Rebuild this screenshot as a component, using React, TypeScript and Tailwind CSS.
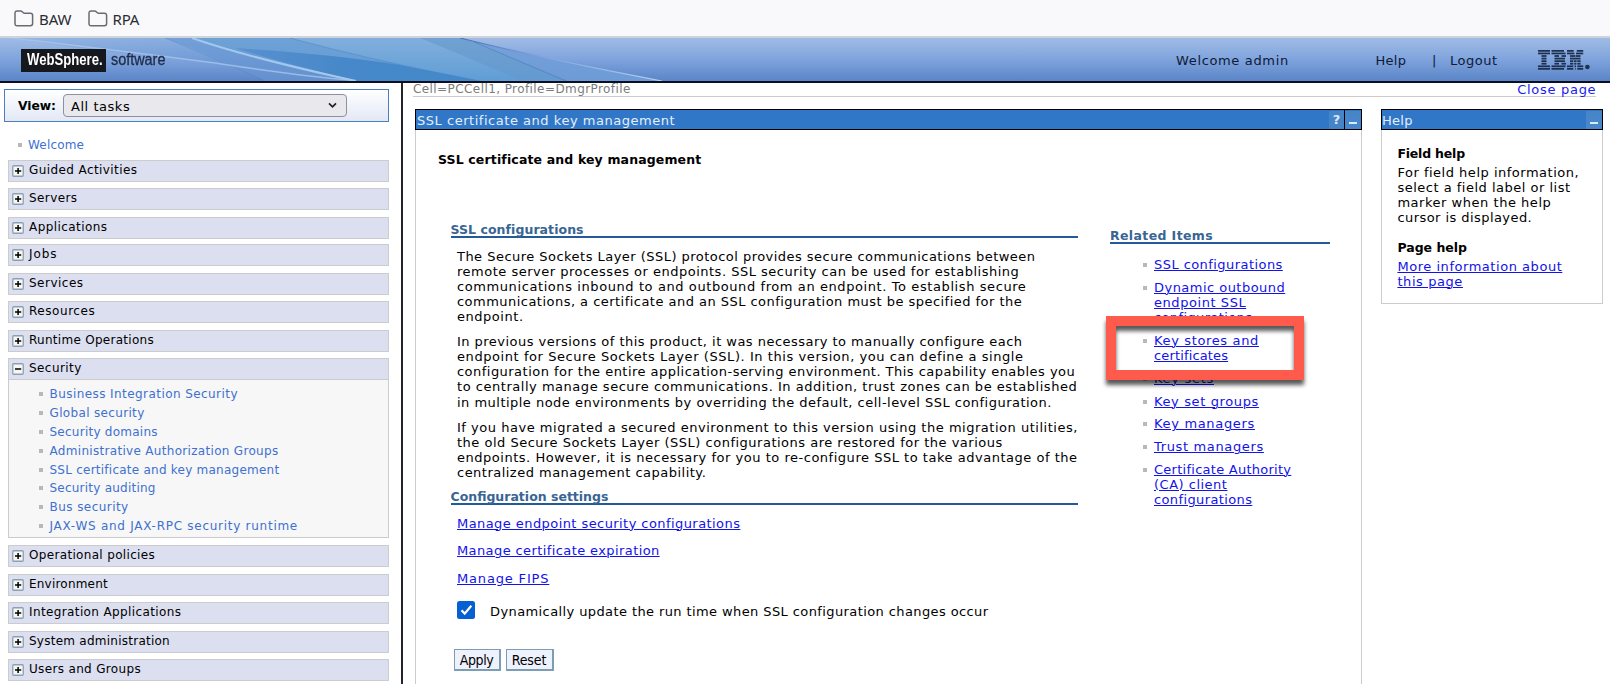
import type { ReactNode } from "react";

type Entry = { label: string; track: string; gap?: string };

const topGroups: Entry[] = [
  { label: "Guided Activities", track: "tracking-[0.41px]", gap: "mt-0" },
  { label: "Servers", track: "tracking-[0.4px]", gap: "mt-[6px]" },
  { label: "Applications", track: "tracking-[0.43px]", gap: "mt-[7px]" },
  { label: "Jobs", track: "tracking-[0.9px]", gap: "mt-[5px]" },
  { label: "Services", track: "tracking-[0.49px]", gap: "mt-[7px]" },
  { label: "Resources", track: "tracking-[0.55px]", gap: "mt-[6px]" },
  { label: "Runtime Operations", track: "tracking-[0.28px]", gap: "mt-[7px]" },
  { label: "Security", track: "tracking-[0.43px]", gap: "mt-[6px]" },
];

const securityItems: Entry[] = [
  { label: "Business Integration Security", track: "tracking-[0.43px]" },
  { label: "Global security", track: "tracking-[0.34px]" },
  { label: "Security domains", track: "tracking-[0.25px]" },
  { label: "Administrative Authorization Groups", track: "tracking-[0.31px]" },
  { label: "SSL certificate and key management", track: "tracking-[0.24px]" },
  { label: "Security auditing", track: "tracking-[0.23px]" },
  { label: "Bus security", track: "tracking-[0.44px]" },
  { label: "JAX-WS and JAX-RPC security runtime", track: "tracking-[0.73px]" },
];

const bottomGroups: Entry[] = [
  { label: "Operational policies", track: "tracking-[0.33px]", gap: "mt-[7px]" },
  { label: "Environment", track: "tracking-[0.21px]", gap: "mt-[7px]" },
  { label: "Integration Applications", track: "tracking-[0.38px]", gap: "mt-[6px]" },
  { label: "System administration", track: "tracking-[0.25px]", gap: "mt-[7px]" },
  { label: "Users and Groups", track: "tracking-[0.34px]", gap: "mt-[6px]" },
];

type Line = [string, string];

const paragraphs: Line[][] = [
  [
    ["The Secure Sockets Layer (SSL) protocol provides secure communications between", "tracking-[0.47px]"],
    ["remote server processes or endpoints. SSL security can be used for establishing", "tracking-[0.5px]"],
    ["communications inbound to and outbound from an endpoint. To establish secure", "tracking-[0.59px]"],
    ["communications, a certificate and an SSL configuration must be specified for the", "tracking-[0.47px]"],
    ["endpoint.", "tracking-[0.53px]"],
  ],
  [
    ["In previous versions of this product, it was necessary to manually configure each", "tracking-[0.47px]"],
    ["endpoint for Secure Sockets Layer (SSL). In this version, you can define a single", "tracking-[0.57px]"],
    ["configuration for the entire application-serving environment. This capability enables you", "tracking-[0.47px]"],
    ["to centrally manage secure communications. In addition, trust zones can be established", "tracking-[0.53px]"],
    ["in multiple node environments by overriding the default, cell-level SSL configuration.", "tracking-[0.48px]"],
  ],
  [
    ["If you have migrated a secured environment to this version using the migration utilities,", "tracking-[0.52px]"],
    ["the old Secure Sockets Layer (SSL) configurations are restored for the various", "tracking-[0.5px]"],
    ["endpoints. However, it is necessary for you to re-configure SSL to take advantage of the", "tracking-[0.52px]"],
    ["centralized management capability.", "tracking-[0.48px]"],
  ],
];

const relatedItems: Line[][] = [
  [["SSL configurations", "tracking-[0.44px]"]],
  [
    ["Dynamic outbound", "tracking-[0.47px]"],
    ["endpoint SSL", "tracking-[0.56px]"],
    ["configurations", "tracking-[0.38px]"],
  ],
  [
    ["Key stores and", "tracking-[0.64px]"],
    ["certificates", "tracking-[0.15px]"],
  ],
  [["Key sets", "tracking-[0.71px]"]],
  [["Key set groups", "tracking-[0.62px]"]],
  [["Key managers", "tracking-[0.67px]"]],
  [["Trust managers", "tracking-[0.65px]"]],
  [
    ["Certificate Authority", "tracking-[0.26px]"],
    ["(CA) client", "tracking-[0.5px]"],
    ["configurations", "tracking-[0.38px]"],
  ],
];

function Lines({ lines }: { lines: Line[] }) {
  return (
    <>
      {lines.map(([text, track]) => (
        <span key={text} className={`block whitespace-nowrap ${track}`}>
          {text}
        </span>
      ))}
    </>
  );
}

function FolderIcon() {
  return (
    <svg width="20" height="18" viewBox="0 0 20 18" fill="none" stroke="#6a6a74" strokeWidth="1.5">
      <path d="M1 3.2Q1 1 3.2 1H6.5Q7.6 1 8.3 1.8L9.3 2.8Q9.8 3.3 10.6 3.3H16.4Q18.6 3.3 18.6 5.5V13.6Q18.6 15.8 16.4 15.8H3.2Q1 15.8 1 13.6Z" />
    </svg>
  );
}

function ToggleIcon({ open }: { open?: boolean }) {
  return (
    <svg width="12" height="12" viewBox="0 0 12 12">
      <rect x="0.75" y="0.75" width="10.5" height="10.5" rx="1" fill="#f6f6f2" stroke="#8ba0b2" strokeWidth="1.3" />
      <path d="M3 6H9.2" stroke="#000" strokeWidth="1.5" />
      {!open && <path d="M6.1 2.9V9.1" stroke="#000" strokeWidth="1.5" />}
    </svg>
  );
}

function Bullet() {
  return <span className="size-[4px] shrink-0 bg-[#b8b8b8]" />;
}

function GroupBar({ entry, open }: { entry: Entry; open?: boolean }) {
  return (
    <div className={`flex h-[22px] items-start border border-[#cccccc] bg-[#dcdff0] pl-[3px] ${entry.gap}`}>
      <span className="mt-[4px] block">
        <ToggleIcon open={open} />
      </span>
      <span className={`ml-[5px] mt-[2px] whitespace-nowrap text-[12px] leading-[15px] ${entry.track}`}>{entry.label}</span>
    </div>
  );
}

function IbmLogo() {
  const bars: [number, number, number][] = [
    [0, 0, 12], [1, 0, 12], [2, 3.5, 5], [3, 3.5, 5], [4, 3.5, 5], [5, 3.5, 5], [6, 0, 12], [7, 0, 12],
    [0, 13.5, 12.5], [1, 13.5, 14], [2, 16.5, 4.5], [2, 23.5, 4.5], [3, 16.5, 10.5], [4, 16.5, 10.5],
    [5, 16.5, 4.5], [5, 23.5, 4.5], [6, 13.5, 14], [7, 13.5, 12.5],
    [0, 29, 6.7], [0, 38.8, 6.4], [1, 29, 7.4], [1, 38, 7.2], [2, 32, 5], [2, 37.5, 5], [3, 32, 10.5],
    [4, 32, 3.3], [4, 36, 2.6], [4, 39.3, 3.3], [5, 32, 3.3], [5, 36.2, 2.2], [5, 39.3, 3.3],
    [6, 29, 6.3], [6, 36.6, 1.4], [6, 39.3, 5.9], [7, 29, 6.3], [7, 37, 0.7], [7, 39.3, 5.9],
  ];
  return (
    <svg width="53" height="20" viewBox="0 0 53 20" fill="#1e3050">
      {bars.map(([row, x, w], i) => (
        <rect key={i} x={x} y={row * 2.57} width={w} height="1.75" />
      ))}
      <circle cx="49.4" cy="17" r="2.3" />
    </svg>
  );
}

function Swoosh() {
  return (
    <svg className="absolute left-0 top-0" width="700" height="43" viewBox="0 0 700 43">
      <defs>
        <linearGradient id="outer" x1="0" x2="0" y1="0" y2="1">
          <stop offset="0" stopColor="#82afdc" />
          <stop offset="1" stopColor="#5f9dd5" />
        </linearGradient>
        <linearGradient id="rim" x1="0" x2="1" y1="0" y2="0">
          <stop offset="0" stopColor="#4a74b4" />
          <stop offset="0.4" stopColor="#7fa3dc" />
          <stop offset="1" stopColor="#b7d0f2" />
        </linearGradient>
        <linearGradient id="mid" x1="0" x2="1" y1="0" y2="0">
          <stop offset="0" stopColor="#5c8fd0" stopOpacity="0.15" />
          <stop offset="1" stopColor="#5c93d0" stopOpacity="0.85" />
        </linearGradient>
        <linearGradient id="band" x1="0" x2="1" y1="0" y2="0">
          <stop offset="0" stopColor="#5a90d0" />
          <stop offset="0.45" stopColor="#4688c9" />
          <stop offset="1" stopColor="#4489c9" />
        </linearGradient>
      </defs>
      <path d="M10 0H460Q540 20 662 43H400Q120 18 10 0Z" fill="url(#mid)" />
      <path d="M455 0Q540 20 662 43H560Z" fill="#7aa3dc" opacity="0.6" />
      <path d="M192 0H462L568 43H350Q250 16 192 0Z" fill="url(#outer)" />
      <path d="M420 0H462L568 43H522Q470 20 420 0Z" fill="#6697cb" opacity="0.6" />
      <path d="M192 0H290Q370 22 480 43H355Q250 18 192 0Z" fill="#5f97d2" opacity="0.55" />
      <path d="M235 10Q330 16 400 27L480 43H355Q280 24 235 10Z" fill="url(#band)" />
      <path d="M165 0Q215 18 265 43H350Q250 16 192 0Z" fill="#6896d2" opacity="0.6" />
      <path d="M290 0Q370 22 480 43" fill="none" stroke="#4a83c4" strokeOpacity="0.5" />
      <path d="M474 4L566 43" fill="none" stroke="#4f80bd" strokeOpacity="0.7" />
      <path d="M165 0Q200 14 265 43" fill="none" stroke="#5580c0" strokeOpacity="0.35" />
      <path d="M12 0Q130 14 215 25Q300 38 350 42" fill="none" stroke="#a8c6ec" strokeWidth="1.6" strokeOpacity="0.8" />
      <path d="M192 0Q250 20 356 43" fill="none" stroke="#a3c8ed" strokeWidth="2" />
      <path d="M460 0Q540 20 662 43" fill="none" stroke="url(#rim)" strokeWidth="1.2" />
    </svg>
  );
}

function MinimizeButton() {
  return (
    <span className="flex h-[18px] w-[16px] items-end justify-center bg-gradient-to-b from-[#4684c8] to-[#4a88cb] pb-[5px]">
      <span className="h-[2px] w-[8px] bg-[#dce9f8]" />
    </span>
  );
}

function SectionTitle({ children, width, track }: { children: ReactNode; width: string; track: string }) {
  return (
    <h2 className={`h-[16px] whitespace-nowrap border-b-2 border-[#255a98] text-[12.5px] font-bold leading-[15px] text-[#386594] ${width} ${track}`}>
      {children}
    </h2>
  );
}

function Link({ children, className }: { children: ReactNode; className?: string }) {
  return (
    <a className={`whitespace-nowrap text-[#1212ea] underline decoration-1 underline-offset-1 ${className ?? ""}`}>{children}</a>
  );
}

function Sidebar() {
  return (
    <aside className="h-full w-[401px] shrink-0 overflow-hidden pl-[4px] pt-[6px]">
      <div className="flex h-[33px] w-[385px] items-center border border-[#4a7fc0] bg-gradient-to-b from-white to-[#e2e8f5] pl-[13px]">
        <span className="w-[45px] pt-[2px] text-[12.3px] font-bold tracking-[-0.05px]">View:</span>
        <span className="flex h-[23px] w-[284px] items-center justify-between rounded-[4px] border border-[#8f8f9d] bg-[#e9e9ed] pl-[7px] pr-[9px] text-[13px] tracking-[0.54px]">
          <span className="pt-[2px]">All tasks</span>
          <svg width="9" height="7" viewBox="0 0 9 7" fill="none" stroke="#222" strokeWidth="1.7">
            <path d="M1 1.3L4.5 4.9L8 1.3" />
          </svg>
        </span>
      </div>
      <div className="mt-[14px] flex h-[18px] items-center pl-[14px] text-[12px] tracking-[0.18px] text-[#4070d4]">
        <Bullet />
        <span className="ml-[6px]">Welcome</span>
      </div>
      <div className="ml-[4px] mt-[6px] w-[381px]">
        {topGroups.map((entry) => (
          <GroupBar key={entry.label} entry={entry} open={entry.label === "Security"} />
        ))}
        <ul className="h-[158px] border border-t-0 border-[#cccccc] bg-[#f7f7f7] pl-[30px] pt-[4.5px]">
          {securityItems.map((item) => (
            <li key={item.label} className="flex h-[18.9px] items-center text-[12px] text-[#4070d0]">
              <Bullet />
              <span className={`ml-[6.5px] whitespace-nowrap ${item.track}`}>{item.label}</span>
            </li>
          ))}
        </ul>
        {bottomGroups.map((entry) => (
          <GroupBar key={entry.label} entry={entry} />
        ))}
      </div>
    </aside>
  );
}

function SslPortlet() {
  return (
    <section className="flex w-[947px] shrink-0 flex-col">
      <div className="flex h-[21px] items-center border border-black bg-[#3077c8] pl-[1px] text-[13px] text-[#e6eefa]">
        <span className="flex-1 whitespace-nowrap pt-[2px] leading-[18px] tracking-[0.53px]">SSL certificate and key management</span>
        <span className="flex h-[18px] w-[15px] items-center justify-center bg-[#4684c8] text-[13px] font-bold text-[#dce9f8]">?</span>
        <span className="h-[19px] w-px bg-black" />
        <MinimizeButton />
      </div>
      <div className="flex flex-1 flex-col border-x border-[#cccccc] pl-[22px] pt-[22px]">
        <h1 className="h-[15px] whitespace-nowrap text-[12.5px] font-bold leading-[15px] tracking-[0.14px]">
          SSL certificate and key management
        </h1>
        <div className="flex pl-[12.5px] pt-[54.5px]">
          <div className="w-[627px] shrink-0">
            <SectionTitle width="w-[627px]" track="tracking-[0.06px]">SSL configurations</SectionTitle>
            <div className="flex flex-col gap-[10.2px] pl-[6.5px] pt-[11px] text-[13px] leading-[15.1px]">
              {paragraphs.map((lines, i) => (
                <p key={i}>
                  <Lines lines={lines} />
                </p>
              ))}
            </div>
            <div className="mt-[8.5px]">
              <SectionTitle width="w-[627px]" track="tracking-normal">Configuration settings</SectionTitle>
            </div>
            <div className="flex flex-col items-start gap-[9.7px] pl-[6.5px] pt-[10px] text-[13px] leading-[18px]">
              <Link className="tracking-[0.43px]">Manage endpoint security configurations</Link>
              <Link className="tracking-[0.4px]">Manage certificate expiration</Link>
              <Link className="tracking-[0.83px]">Manage FIPS</Link>
            </div>
            <div className="mt-[13px] flex h-[18px] items-center pl-[6.5px] text-[13px]">
              <span className="flex size-[18px] items-center justify-center rounded-[2.5px] bg-[#0560d2]">
                <svg width="13" height="12" viewBox="0 0 13 12" fill="none" stroke="#fff" strokeWidth="2.2">
                  <path d="M1.5 6.3L4.7 9.6L11.3 1.8" />
                </svg>
              </span>
              <span className="ml-[15px] mt-[4px] whitespace-nowrap tracking-[0.4px]">
                Dynamically update the run time when SSL configuration changes occur
              </span>
            </div>
            <div className="mt-[29.5px] flex gap-[5px] pl-[3px] font-['DejaVu_Sans_Condensed','DejaVu_Sans',sans-serif] text-[14px]">
              <button className="h-[22px] w-[47px] border-b-2 border-l border-r-2 border-t border-[#7d9db5] bg-[#edf2fd] pt-px leading-[19px] tracking-[-0.4px]">Apply</button>
              <button className="h-[22px] w-[48px] border-b-2 border-l border-r-2 border-t border-[#7d9db5] bg-[#edf2fd] pt-px leading-[19px] tracking-[-0.1px]">Reset</button>
            </div>
          </div>
          <div className="relative ml-[32.5px] mt-[6.5px] w-[220px] shrink-0">
            <SectionTitle width="w-[220px]" track="tracking-[0.38px]">Related Items</SectionTitle>
            <ul className="flex flex-col gap-[7.6px] pl-[33px] pt-[13.2px] text-[13px] leading-[15.15px]">
              {relatedItems.map((lines) => (
                <li key={lines[0][0]} className="flex items-start">
                  <span className="mt-[6px] block size-[4px] shrink-0 bg-[#b8b8b8]" />
                  <Link className="ml-[7px]">
                    <Lines lines={lines} />
                  </Link>
                </li>
              ))}
            </ul>
            <div className="absolute left-[-4px] top-[88px] h-[64px] w-[198px] border-[10px] border-[#ff5b4d] drop-shadow-[0_5px_2px_rgba(0,0,0,0.65)]" />
          </div>
        </div>
      </div>
    </section>
  );
}

function HelpPortlet() {
  return (
    <section className="ml-[19px] w-[222px] shrink-0">
      <div className="flex h-[21px] items-center border border-black bg-[#3077c8] text-[13px] text-[#e6eefa]">
        <span className="flex-1 pt-[2px] leading-[18px] tracking-[0.29px]">Help</span>
        <MinimizeButton />
      </div>
      <div className="h-[174px] border border-t-0 border-[#cccccc] pl-[15.4px] pt-[15.5px] text-[13px] leading-[15.1px]">
        <h3 className="text-[12.5px] font-bold tracking-[-0.2px]">Field help</h3>
        <p className="mt-[4px]">
          <Lines
            lines={[
              ["For field help information,", "tracking-[0.51px]"],
              ["select a field label or list", "tracking-[0.5px]"],
              ["marker when the help", "tracking-[0.53px]"],
              ["cursor is displayed.", "tracking-[0.44px]"],
            ]}
          />
        </p>
        <h3 className="mt-[15px] text-[12.5px] font-bold">Page help</h3>
        <p className="mt-[3.5px]">
          <Link>
            <Lines
              lines={[
                ["More information about", "tracking-[0.54px]"],
                ["this page", "tracking-[0.58px]"],
              ]}
            />
          </Link>
        </p>
      </div>
    </section>
  );
}

export default function App() {
  return (
    <div className="flex h-[684px] w-[1610px] flex-col overflow-hidden bg-white font-['DejaVu_Sans',sans-serif] text-black">
      <nav className="flex h-[38px] shrink-0 items-center border-b-2 border-[#cfd3da] bg-[#f9f9fb] pl-[14px] pt-[2px] font-['Noto_Sans',sans-serif] text-[15px] text-[#2b2b33]">
        <FolderIcon />
        <span className="ml-[5px] w-[48.5px] tracking-[-0.1px]">BAW</span>
        <FolderIcon />
        <span className="ml-[5px] tracking-[-0.2px]">RPA</span>
      </nav>
      <header className="relative flex h-[45px] shrink-0 items-center border-b-2 border-[#0b0f20] bg-gradient-to-b from-[#a0bce5] via-[#7fa3dc] to-[#5b85c8] text-[13px] text-[#0e1a38]">
        <Swoosh />
        <div className="relative ml-[21px] mt-[1px] flex h-[23px] w-[85px] items-center bg-[#15181c] pl-[6px] font-['Liberation_Sans',sans-serif] text-[16px] font-bold text-white">
          <span className="origin-left scale-x-[0.82]">WebSphere.</span>
        </div>
        <div className="relative ml-[4.5px] mt-[1px] w-[60px] font-['Liberation_Sans',sans-serif] text-[16px] text-[#1d2c48]">
          <span className="inline-block origin-left scale-x-[0.9] [-webkit-text-stroke:0.3px_#1d2c48]">software</span>
        </div>
        <span className="ml-auto w-[199.5px] whitespace-nowrap pt-[3px] tracking-[0.65px]">Welcome admin</span>
        <span className="w-[56.5px] pt-[3px] tracking-[0.29px]">Help</span>
        <span className="w-[18px] pt-[2px]">|</span>
        <span className="w-[88px] pt-[3px] tracking-[0.5px]">Logout</span>
        <span className="w-[72px]">
          <IbmLogo />
        </span>
      </header>
      <div className="flex min-h-0 flex-1">
        <Sidebar />
        <div className="w-[2px] shrink-0 bg-[#22252b]" />
        <main className="flex min-w-0 flex-1 flex-col pl-[10px]">
          <div className="flex h-[14px] w-[1183px] shrink-0 justify-between whitespace-nowrap border-b border-[#cccccc] leading-[13px]">
            <span className="text-[12px] tracking-[0.42px] text-[#7c7c7c]">Cell=PCCell1, Profile=DmgrProfile</span>
            <span className="-mr-[0.3px] text-[13px] tracking-[0.7px] text-[#1a1af0]">Close page</span>
          </div>
          <div className="flex min-h-0 flex-1 items-stretch pl-[2px] pt-[12px]">
            <SslPortlet />
            <HelpPortlet />
          </div>
        </main>
      </div>
    </div>
  );
}
